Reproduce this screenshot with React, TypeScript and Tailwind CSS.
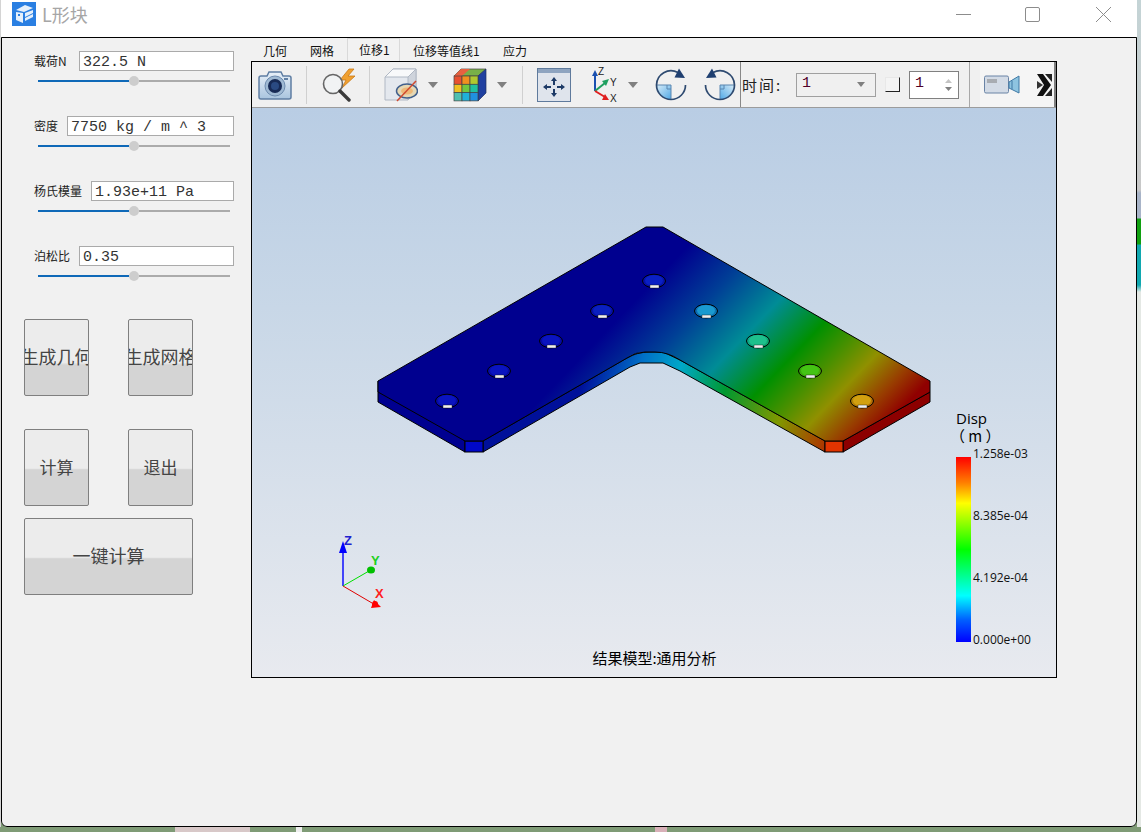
const sansFont = "font-['Noto_Sans_CJK_SC','Liberation_Sans',sans-serif]";
const monoFont = "font-['Liberation_Mono','Noto_Sans_CJK_SC',monospace]";

const params = [
  { label: "载荷N", value: "322.5 N", labelWidth: "w-[45px]" },
  { label: "密度", value: "7750 kg / m ^ 3", labelWidth: "w-[33px]" },
  { label: "杨氏模量", value: "1.93e+11 Pa", labelWidth: "w-[57px]" },
  { label: "泊松比", value: "0.35", labelWidth: "w-[45px]" },
];

const holes = [
  { x: 447, y: 401, fill: "#0a14c0" },
  { x: 499, y: 371, fill: "#0a14c0" },
  { x: 551, y: 341, fill: "#0a14c0" },
  { x: 602, y: 311, fill: "#0a20c0" },
  { x: 654, y: 281, fill: "#0a20c4" },
  { x: 706, y: 311, fill: "#1a9ad0" },
  { x: 758, y: 341, fill: "#1ec08c" },
  { x: 810, y: 371, fill: "#44c414" },
  { x: 862, y: 401, fill: "#d2a010" },
];

function ParamRow({ label, value, labelWidth }: { label: string; value: string; labelWidth: string }) {
  return (
    <div className="h-[65px] pl-[32px]">
      <div className="flex items-center w-[200px] h-[20px]">
        <span className={`${labelWidth} shrink-0 text-[12px] leading-none text-[#222] ${sansFont}`}>{label}</span>
        <div className={`flex-1 h-[20px] bg-white border border-[#aaa] pl-[3px] text-[15px] leading-[22px] text-[#333] whitespace-pre ${monoFont}`}>
          {value}
        </div>
      </div>
      <div className="flex items-center w-[192px] ml-[4px] mt-[5px] h-[10px]">
        <div className="w-[91px] h-[2px] bg-[#0f69b8]"></div>
        <div className="w-[10px] h-[10px] rounded-full bg-[#cdcdcd]"></div>
        <div className="w-[91px] h-[2px] bg-[#ababab]"></div>
      </div>
    </div>
  );
}

function ActionButton({ text, className, fade, textSize }: { text: string; className: string; fade: string; textSize: string }) {
  return (
    <div className={`${className} ${fade} ${textSize} ${sansFont} flex items-center justify-center overflow-hidden whitespace-nowrap rounded-[2px] border border-[#7f7f7f] pb-[2px] text-[#444]`}>
      <span className="shrink-0">{text}</span>
    </div>
  );
}

function Separator({ className }: { className: string }) {
  return <div className={`${className} w-[1px] h-[38px] bg-[#d0d0d0] shrink-0`}></div>;
}

function DropArrow({ className }: { className: string }) {
  return (
    <svg className={`${className} shrink-0`} width="10" height="6" viewBox="0 0 10 6">
      <path d="M0 0 H10 L5 6 Z" fill="#808080" />
    </svg>
  );
}

function CameraIcon() {
  return (
    <svg className="ml-[6px] shrink-0" width="34" height="30" viewBox="0 0 34 30">
      <defs>
        <linearGradient id="cam" x1="0" y1="0" x2="0" y2="1">
          <stop offset="0" stopColor="#e8f0f8" />
          <stop offset="1" stopColor="#a9c4de" />
        </linearGradient>
      </defs>
      <path d="M3 6 H9 L11 2 H23 L25 6 H31 Q33 6 33 8 V27 Q33 29 31 29 H3 Q1 29 1 27 V8 Q1 6 3 6 Z" fill="url(#cam)" stroke="#5f7ea3" strokeWidth="1.5" />
      <circle cx="17" cy="16" r="10" fill="#9fb9d3" stroke="#6d8bae" />
      <circle cx="17" cy="16" r="7" fill="#172a55" />
      <circle cx="17" cy="16" r="4" fill="#2a4a82" />
      <rect x="26" y="8" width="4" height="2" fill="#5f7ea3" />
    </svg>
  );
}

function SearchBoltIcon() {
  return (
    <svg className="ml-[14px] shrink-0" width="36" height="34" viewBox="0 0 36 34">
      <path d="M28 1 L19 12 H25 L21 20 L34 8 H27 L33 1 Z" fill="#f0a030" stroke="#c87818" strokeWidth="0.8" />
      <circle cx="12" cy="16" r="9.5" fill="#f1f3f5" fillOpacity="0.85" stroke="#666" strokeWidth="1.6" />
      <path d="M19 23 L28 32" stroke="#3a3a3a" strokeWidth="3.4" strokeLinecap="round" />
    </svg>
  );
}

function CubeSliceIcon() {
  return (
    <svg className="ml-[14px] shrink-0" width="34" height="36" viewBox="0 0 34 36">
      <path d="M1 10 L9 2 H32 V24 L24 33 H1 Z" fill="#e4e8ee" stroke="#b0b8c4" />
      <path d="M1 10 L9 2 H32 L24 10 Z" fill="#f8f9fa" stroke="#b0b8c4" />
      <path d="M24 10 L32 2 V24 L24 33 Z" fill="#cfd4dc" stroke="#b0b8c4" />
      <ellipse cx="23" cy="24" rx="10.5" ry="7" fill="#e6d8b4" stroke="#42608c" strokeWidth="1.5" />
      <ellipse cx="23" cy="24" rx="6" ry="3.5" fill="#eeb878" />
      <path d="M13 34 L32 14" stroke="#cf4a30" strokeWidth="1.5" />
    </svg>
  );
}

function ColorCubeIcon() {
  const colors = ["#e85030", "#f09020", "#b0c830", "#f0c020", "#70c840", "#20c0a0", "#50c0b0", "#20b0d8", "#2090e0"];
  return (
    <svg className="ml-[15px] shrink-0" width="34" height="34" viewBox="0 0 34 34">
      <path d="M8 1 H33 L25 8 H1 Z" fill="#78b048" stroke="#444" strokeWidth="0.7" />
      <path d="M8 1 H17 L9 8 H1 Z" fill="#e86040" />
      <path d="M25 8 L33 1 V25 L25 33 Z" fill="#2040a0" stroke="#203060" strokeWidth="0.7" />
      {colors.map((color, i) => (
        <rect key={i} x={1 + (i % 3) * 8} y={8 + Math.floor(i / 3) * 8.3} width="8" height="8.3" fill={color} stroke="#444" strokeWidth="0.7" />
      ))}
    </svg>
  );
}

function FitIcon() {
  return (
    <svg className="ml-[14px] shrink-0" width="34" height="34" viewBox="0 0 34 34">
      <rect x="0.5" y="0.5" width="33" height="33" fill="#dfe4ec" stroke="#5f7a9c" />
      <rect x="1" y="1" width="32" height="4" fill="#8ea4c0" />
      <path d="M17 9 L20 13 H18 V17 H16 V13 H14 Z M17 29 L14 25 H16 V21 H18 V25 H20 Z M6 19 L10 16 V18 H14 V20 H10 V22 Z M28 19 L24 22 V20 H20 V18 H24 V16 Z" fill="#1d3a66" />
    </svg>
  );
}

function AxesIcon() {
  return (
    <svg className="ml-[19px] shrink-0" width="28" height="36" viewBox="0 0 28 36">
      <path d="M5 24 V7" stroke="#1a50b0" strokeWidth="2" />
      <path d="M5 3 L2 9 H8 Z" fill="#1a50b0" />
      <path d="M5 24 L15 16" stroke="#20a060" strokeWidth="2" />
      <path d="M19 12 L12 14 L16 19 Z" fill="#20a060" />
      <path d="M5 24 L15 30" stroke="#e02020" strokeWidth="2" />
      <path d="M19 33 L12 33 L15 27 Z" fill="#e02020" />
      <text x="8" y="8" fontSize="10" fontFamily="Liberation Sans" fill="#222">Z</text>
      <text x="20" y="19" fontSize="10" fontFamily="Liberation Sans" fill="#222">Y</text>
      <text x="20" y="35" fontSize="10" fontFamily="Liberation Sans" fill="#222">X</text>
    </svg>
  );
}

function RotateIcon({ className, flip, gradientId }: { className: string; flip?: boolean; gradientId: string }) {
  return (
    <svg className={`${className} shrink-0 ${flip ? "-scale-x-100" : ""}`} width="32" height="34" viewBox="0 0 32 34">
      <defs>
        <linearGradient id={gradientId} x1="0" y1="0" x2="1" y2="1">
          <stop offset="0" stopColor="#d8ecf8" />
          <stop offset="1" stopColor="#4fa8e6" />
        </linearGradient>
      </defs>
      <path d="M1.5 17 H16 V31.5 A14.5 14.5 0 0 1 1.5 17 Z" fill={`url(#${gradientId})`} />
      <path d="M1.5 17 H16 V31 M12 17 V21 H16" fill="none" stroke="#5a86b0" strokeWidth="1" />
      <path d="M1.5 17 A14.5 14.5 0 0 1 23 4.5" fill="none" stroke="#2e4a70" strokeWidth="1.7" />
      <path d="M30.5 17 A14.5 14.5 0 0 1 1.5 17" fill="none" stroke="#2e4a70" strokeWidth="1.7" />
      <path d="M24 0.5 L30 10 L19.5 9.5 Z" fill="#1f3f70" />
    </svg>
  );
}

function CamcorderIcon() {
  return (
    <svg className="ml-[4px] shrink-0" width="36" height="20" viewBox="0 0 36 20">
      <rect x="0.5" y="1" width="24" height="17" rx="1.5" fill="#d3dbe6" stroke="#6a84a6" />
      <rect x="3" y="4" width="10" height="4" fill="#a8acb2" />
      <path d="M25 7 L35 1 V18 L25 13 Z" fill="#8ec4e0" stroke="#3f78a4" />
      <path d="M28 6 V14" stroke="#3f78a4" />
    </svg>
  );
}

function ChevronIcon() {
  return (
    <svg className="ml-[17px] shrink-0" width="15" height="22" viewBox="0 0 15 22">
      <path d="M0 0 H6 L14 11 L6 22 H0 L7 11 Z" fill="#111" />
      <path d="M0 7 L6 11 L0 15 Z" fill="#333" />
      <path d="M8 0 H15 V8 Z M8 22 H15 V14 Z" fill="#222" />
    </svg>
  );
}

function Toolbar() {
  return (
    <div className="flex items-center h-[46px] bg-[#f0f0f0] border-b border-[#9c9c9c]">
      <CameraIcon />
      <Separator className="ml-[14px]" />
      <SearchBoltIcon />
      <Separator className="ml-[12px]" />
      <CubeSliceIcon />
      <DropArrow className="ml-[10px]" />
      <ColorCubeIcon />
      <DropArrow className="ml-[10px]" />
      <Separator className="ml-[15px]" />
      <FitIcon />
      <AxesIcon />
      <DropArrow className="ml-[10px]" />
      <RotateIcon className="ml-[17px]" gradientId="rotateLeft" />
      <RotateIcon className="ml-[17px]" gradientId="rotateRight" flip />
      <div className="ml-[4px] w-[1px] h-[45px] bg-[#888] shrink-0"></div>
      <span className={`ml-[1px] w-[44px] shrink-0 text-[15px] leading-none tracking-[2px] whitespace-nowrap text-[#222] ${sansFont}`}>时间:</span>
      <div className={`ml-[10px] flex items-center justify-between w-[80px] h-[24px] shrink-0 pl-[5px] pr-[8px] border border-[#a0a0a0] bg-[#f0f0f0] text-[15px] text-[#500028] ${monoFont}`}>
        <span>1</span>
        <svg width="12" height="6" viewBox="0 0 12 6"><path d="M2 0 H10 L6 5 Z" fill="#808080" /></svg>
      </div>
      <div className="ml-[9px] w-[15px] h-[15px] shrink-0 bg-[#f4f4f4] border-t border-l border-r border-b border-t-[#e8e8e8] border-l-[#e8e8e8] border-r-[#222] border-b-[#222]"></div>
      <div className={`ml-[9px] flex items-center justify-between w-[50px] h-[28px] shrink-0 pl-[5px] pr-[6px] border border-[#808080] bg-white text-[15px] text-[#500028] ${monoFont}`}>
        <span>1</span>
        <div className="flex flex-col gap-[4px]">
          <svg width="7" height="4" viewBox="0 0 7 4"><path d="M3.5 0 L7 4 H0 Z" fill="#c4c4c4" /></svg>
          <svg width="7" height="4" viewBox="0 0 7 4"><path d="M0 0 H7 L3.5 4 Z" fill="#808080" /></svg>
        </div>
      </div>
      <div className="ml-[10px] w-[1px] h-[45px] bg-[#a8a8a8] shrink-0"></div>
      <div className="ml-[10px] flex items-center flex-1 h-[45px] bg-[#f5f5f5] border-r-2 border-[#808080]">
        <CamcorderIcon />
        <ChevronIcon />
      </div>
    </div>
  );
}

function ModelCanvas() {
  return (
    <svg className="block" width="804" height="569" viewBox="252 108 804 569">
      <defs>
        <linearGradient id="disp" gradientUnits="userSpaceOnUse" x1="640" y1="215" x2="928" y2="491">
          <stop offset="0" stopColor="#00008f" />
          <stop offset="0.14" stopColor="#00008f" />
          <stop offset="0.27" stopColor="#003f96" />
          <stop offset="0.4" stopColor="#008c96" />
          <stop offset="0.52" stopColor="#009000" />
          <stop offset="0.6" stopColor="#4a9000" />
          <stop offset="0.67" stopColor="#909000" />
          <stop offset="0.75" stopColor="#983c00" />
          <stop offset="0.81" stopColor="#900000" />
          <stop offset="1" stopColor="#900000" />
        </linearGradient>
        <linearGradient id="dispSide" gradientUnits="userSpaceOnUse" x1="590" y1="360" x2="850" y2="450">
          <stop offset="0" stopColor="#00109a" />
          <stop offset="0.18" stopColor="#0070c8" />
          <stop offset="0.32" stopColor="#00a8c8" />
          <stop offset="0.5" stopColor="#009830" />
          <stop offset="0.72" stopColor="#809800" />
          <stop offset="0.92" stopColor="#b03000" />
          <stop offset="1" stopColor="#b02000" />
        </linearGradient>
      </defs>

      {/* side faces */}
      <path d="M378 381 V402 L465 452 V441 Z" fill="#000090" stroke="#000" />
      <path d="M483 441 L627 358 Q637 352 650 352 L663 352 L680 360 L825 441 V452 L680 371 L663 363 H640 L630 367 L483 452 Z" fill="url(#dispSide)" stroke="#000" />
      <path d="M843 441 L930 392 V402 L843 452 Z" fill="#8c0000" stroke="#000" />
      <rect x="465" y="441" width="18" height="11" fill="#0008c8" stroke="#000" />
      <rect x="825" y="441" width="18" height="11" fill="#e03400" stroke="#000" />

      {/* top face */}
      <path
        d="M378 381 L646 227 H663 L930 381 V392 L843 441 H825 L680 360 Q668 352 655 352 H645 Q635 352 627 358 L483 441 H465 L378 392 Z"
        fill="url(#disp)"
        stroke="#000"
      />

      {holes.map((hole) => (
        <g key={hole.x}>
          <ellipse cx={hole.x} cy={hole.y} rx="11.5" ry="6.8" fill={hole.fill} fillOpacity="0.45" stroke="#000" />
          <ellipse cx={hole.x} cy={hole.y - 0.5} rx="9" ry="5.5" fill={hole.fill} />
          <rect x={hole.x - 4} y={hole.y + 4} width="9" height="3" fill="#f0f0f0" stroke="#111" strokeWidth="0.4" />
        </g>
      ))}

      {/* axis triad */}
      <path d="M343 586 V548" stroke="#0000ff" strokeWidth="1.4" />
      <path d="M343 541 L339 553 H347 Z" fill="#0000ff" />
      <path d="M343 586 L369 571" stroke="#00e000" strokeWidth="1" />
      <ellipse cx="371" cy="570" rx="4" ry="3.5" fill="#00c000" />
      <path d="M343 586 L372 603" stroke="#e00000" strokeWidth="1" />
      <path d="M381 607 L371 608 L374 600 Z" fill="#ff0000" />
      <circle cx="375" cy="604" r="3" fill="#ff0000" />
      <text x="344" y="545" fontSize="13" fontWeight="700" fontFamily="Liberation Sans" fill="#2020d0">Z</text>
      <text x="371" y="565" fontSize="13" fontWeight="700" fontFamily="Liberation Sans" fill="#20d020">Y</text>
      <text x="375" y="598" fontSize="13" fontWeight="700" fontFamily="Liberation Sans" fill="#ff2020">X</text>
    </svg>
  );
}

function Legend() {
  const ticks = ["1.258e-03", "8.385e-04", "4.192e-04", "0.000e+00"];
  return (
    <div className="absolute left-[704px] top-[302px] font-['Open_Sans',sans-serif] text-black">
      <div className="h-[17px] text-[15px] leading-[17px]">Disp</div>
      <div className={`h-[17px] text-[15px] leading-[17px] whitespace-nowrap -ml-[6px] ${sansFont}`}>（ m ）</div>
      <div className="flex mt-[13px]">
        <div className="w-[15px] h-[185px] bg-[linear-gradient(to_bottom,#ff0000,#ff8000_14%,#ffff00_25%,#00ff00_50%,#00ffff_75%,#0060ff_88%,#0000ff)]"></div>
        <div className="flex flex-col justify-between h-[200px] -mt-[10px] ml-[2px] text-[12px] leading-[14px] text-[#111]">
          {ticks.map((tick) => (
            <span key={tick}>{tick}</span>
          ))}
        </div>
      </div>
    </div>
  );
}

function Viewport() {
  return (
    <div className="relative h-[569px] bg-[linear-gradient(to_bottom,#b9cde4,#c8d7e7_35%,#e8eaef)]">
      <ModelCanvas />
      <Legend />
      <div className={`absolute left-0 right-0 bottom-[9px] pl-[1px] text-center text-[15px] leading-[20px] text-black ${sansFont}`}>
        结果模型:通用分析
      </div>
    </div>
  );
}

function TabBar() {
  const tabs = [
    { text: "几何", className: "ml-[12px] w-[47px]" },
    { text: "网格", className: "w-[26px]" },
    { text: "位移1", className: "ml-[11px] w-[53px] h-[23px] pl-[11px] bg-[#f2f2f2] border border-b-0 border-[#d9d9d9]" },
    { text: "位移等值线1", className: "ml-[13px] w-[90px]" },
    { text: "应力", className: "w-[30px]" },
  ];
  return (
    <div className={`flex items-end h-[23px] text-[12px] leading-[21px] text-[#111] whitespace-nowrap ${sansFont}`}>
      {tabs.map((tab) => (
        <div key={tab.text} className={`${tab.className} shrink-0`}>{tab.text}</div>
      ))}
    </div>
  );
}

function App() {
  return (
    <div className="relative w-[1141px] h-[832px] overflow-hidden bg-[linear-gradient(to_right,#7f9b76_175px,#d8c8c8_175px,#d8c8c8_250px,#7f9b76_250px,#7f9b76_296px,#eeeeee_296px,#eeeeee_302px,#7f9b76_302px,#7f9b76_655px,#d8b0b8_655px,#d8b0b8_667px,#7f9b76_667px)]">
      {/* desktop showing behind the window */}
      <div className="absolute left-0 top-0 w-[1px] h-[827px] bg-[#d4d4d4]"></div>
      <div className="absolute right-0 top-0 w-[4px] h-[827px] bg-[linear-gradient(to_bottom,#c4d4d6_0px,#c8c8c8_190px,#a8b4c8_193px,#a8b4c8_218px,#10a010_219px,#10a010_244px,#10a8b0_245px,#10a8b0_285px,#e4e8e4_292px)]"></div>

      <div className="ml-[1px] w-[1136px] h-[827px] flex flex-col rounded-b-[6px] overflow-hidden">
        <div className="flex items-start h-[37px] shrink-0 bg-white">
          <svg className="ml-[11px] mt-[2px]" width="24" height="24" viewBox="0 0 24 24">
            <rect width="24" height="24" fill="#2a7fe2" />
            <path d="M4 8 L13 3 L21 6 L12 10 Z M13 11 L21 8 V11 L13 15 Z M13 16 L21 12 V15 L13 19 Z M4 10 L11 11 V21 L4 18 Z" fill="#e6f0fb" />
            <rect x="6" y="12" width="2" height="2" fill="#2a7fe2" />
          </svg>
          <span className={`ml-[6px] mt-[2px] text-[18px] leading-[24px] text-[#a6a6a6] ${sansFont}`}>L形块</span>
          <div className="flex-1"></div>
          <div className="mt-[14px] w-[15px] h-[1px] bg-[#8c8c8c]"></div>
          <div className="ml-[54px] mt-[7px] w-[15px] h-[15px] rounded-[2px] border border-[#8c8c8c]"></div>
          <svg className="ml-[56px] mr-[26px] mt-[7px]" width="15" height="15" viewBox="0 0 15 15">
            <path d="M0 0 L15 15 M15 0 L0 15" stroke="#8c8c8c" strokeWidth="1" />
          </svg>
        </div>

        <div className="flex flex-1 bg-[#f1f1f1] border border-black rounded-b-[6px]">
          <div className="w-[249px] shrink-0 pt-[13px]">
            {params.map((p) => (
              <ParamRow key={p.label} label={p.label} value={p.value} labelWidth={p.labelWidth} />
            ))}
            <div className="flex gap-[39px] pl-[22px] mt-[8px]">
              <ActionButton text="生成几何" className="w-[65px] h-[77px]" fade="bg-[linear-gradient(to_bottom,#ececec_58%,#e2e2e2_58%,#d4d4d4_60%)]" textSize="text-[18px]" />
              <ActionButton text="生成网格" className="w-[65px] h-[77px]" fade="bg-[linear-gradient(to_bottom,#ececec_58%,#e2e2e2_58%,#d4d4d4_60%)]" textSize="text-[18px]" />
            </div>
            <div className="flex gap-[39px] pl-[22px] mt-[33px]">
              <ActionButton text="计算" className="w-[65px] h-[77px]" fade="bg-[linear-gradient(to_bottom,#ececec_51%,#d4d4d4_53%)]" textSize="text-[17px]" />
              <ActionButton text="退出" className="w-[65px] h-[77px]" fade="bg-[linear-gradient(to_bottom,#ececec_51%,#d4d4d4_53%)]" textSize="text-[17px]" />
            </div>
            <div className="pl-[22px] mt-[12px]">
              <ActionButton text="一键计算" className="w-[169px] h-[77px]" fade="bg-[linear-gradient(to_bottom,#ececec_51%,#d4d4d4_53%)]" textSize="text-[18px]" />
            </div>
          </div>

          <div className="w-[806px] shrink-0">
            <TabBar />
            <div className="border border-black h-[617px]">
              <Toolbar />
              <Viewport />
            </div>
          </div>
        </div>
      </div>
    </div>
  );
}

export default App;
